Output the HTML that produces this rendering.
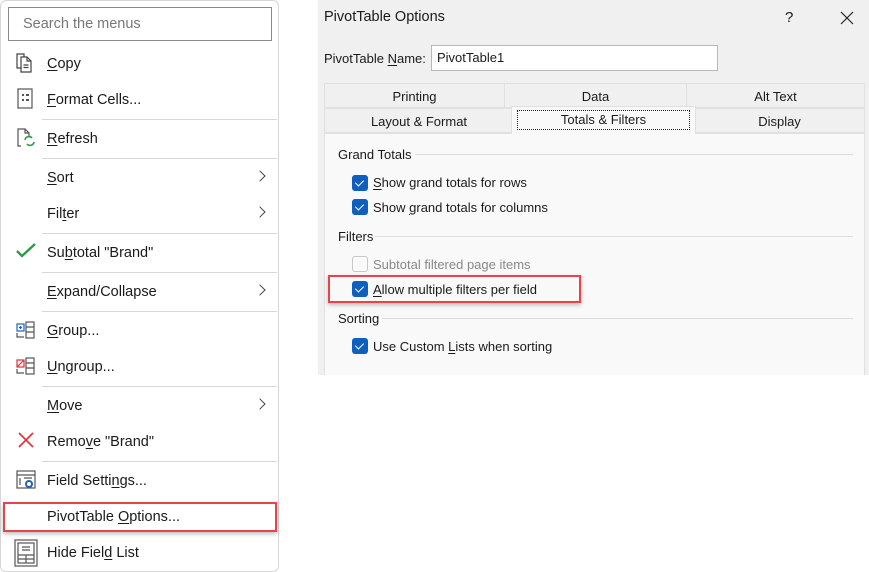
<!DOCTYPE html>
<html><head><meta charset="utf-8"><style>
*{margin:0;padding:0;box-sizing:border-box}
body{width:869px;height:572px;background:#fff;font-family:"Liberation Sans",sans-serif;position:relative;overflow:hidden;color:#1a1a1a}
.a{position:absolute}
.menu{left:0;top:0;width:279px;height:572px;border:1px solid #d6d6d6;border-radius:6px;background:#fff}
.search{left:8px;top:7px;width:264px;height:34px;border:1px solid #8a8a8a;color:#777;font-size:14.5px;padding:8px 14px}
.it{left:47px;font-size:14.5px;line-height:18px}
.sep{left:42px;width:235px;height:1px;background:#d8d8d8}
.chev{left:256px;width:8px;height:8px;border-right:1.5px solid #444;border-top:1.5px solid #444;transform:rotate(45deg)}
u{text-decoration:underline;text-underline-offset:2px}
.dlg{left:318px;top:0;width:551px;height:375px;background:#f0f0f0}
.tab{font-size:13px;text-align:center;height:25px;line-height:25px;border:1px solid #e0e0e0;background:#f0f0f0}
.panel{left:324px;top:133px;width:541px;height:242px;background:#f9f9f9;border:1px solid #e0e0e0;border-bottom:none}
.lbl{font-size:13px;left:338px}
.line{height:1px;background:#dcdcdc}
.cb{left:352px;width:16px;height:16px;border-radius:3px;background:#0f5fbf}
.cb::after{content:"";position:absolute;left:5px;top:3px;width:4px;height:7px;border-right:1.5px solid #fff;border-bottom:1.5px solid #fff;transform:rotate(45deg)}
.ct{left:373px;font-size:13px}
.red{border:2px solid #e8424a;box-shadow:0 2px 4px rgba(0,0,0,.25)}
</style></head><body>
<div class="a menu"></div>
<div class="a search">Search the menus</div>

<svg class="a" style="left:15px;top:52px" width="22" height="22" viewBox="0 0 22 22" fill="none" stroke="#444" stroke-width="1.2"><path d="M2 2h7v14H2z"/><path d="M6 5h6l4 4v11H6z" fill="#fff"/><path d="M12 5v4h4M8.5 13h5M8.5 15.5h5"/></svg>
<div class="a it" style="top:55px"><u>C</u>opy</div>
<svg class="a" style="left:17px;top:88px" width="18" height="22" viewBox="0 0 18 22" fill="none" stroke="#555" stroke-width="1.2"><rect x="1" y="1" width="14" height="19"/><path d="M5 7h2M5 12h2M9 7h3M9 12h3" stroke-width="2"/></svg>
<div class="a it" style="top:91px"><u>F</u>ormat Cells...</div>
<div class="a sep" style="top:119px"></div>
<svg class="a" style="left:16px;top:127px" width="22" height="22" viewBox="0 0 22 22" fill="none" stroke-width="1.2"><path d="M5 19H2V2h7l4 4v3" stroke="#555"/><path d="M9 2v4h4" stroke="#555"/><path d="M9 13a4 4 0 0 1 7-2M18 15a4 4 0 0 1-7 2" stroke="#2e9a48" stroke-width="1.6"/></svg>
<div class="a it" style="top:130px"><u>R</u>efresh</div>
<div class="a sep" style="top:158px"></div>
<div class="a it" style="top:169px"><u>S</u>ort</div><div class="a chev" style="top:172px"></div>
<div class="a it" style="top:205px">Fil<u>t</u>er</div><div class="a chev" style="top:208px"></div>
<div class="a sep" style="top:233px"></div>
<svg class="a" style="left:15px;top:242px" width="22" height="18" viewBox="0 0 22 18" fill="none" stroke="#2e9a48" stroke-width="2.4"><path d="M2 9l5 5L20 2"/></svg>
<div class="a it" style="top:244px">Su<u>b</u>total "Brand"</div>
<div class="a sep" style="top:272px"></div>
<div class="a it" style="top:283px"><u>E</u>xpand/Collapse</div><div class="a chev" style="top:286px"></div>
<div class="a sep" style="top:311px"></div>
<svg class="a" style="left:15px;top:320px" width="22" height="20" viewBox="0 0 22 20" fill="none" stroke="#555" stroke-width="1.2"><rect x="2" y="4" width="7" height="7" stroke="#1e63b8"/><path d="M5.5 6v3M4 7.5h3" stroke="#1e63b8"/><rect x="11" y="2" width="8" height="16"/><path d="M11 7h8M11 12h8M2 13v4h7"/></svg>
<div class="a it" style="top:322px"><u>G</u>roup...</div>
<svg class="a" style="left:15px;top:356px" width="22" height="20" viewBox="0 0 22 20" fill="none" stroke="#555" stroke-width="1.2"><rect x="2" y="4" width="7" height="7" stroke="#e0303a"/><path d="M2 11l7-7" stroke="#e0303a"/><rect x="11" y="2" width="8" height="16"/><path d="M11 7h8M11 12h8M2 13v4h7"/></svg>
<div class="a it" style="top:358px"><u>U</u>ngroup...</div>
<div class="a sep" style="top:386px"></div>
<div class="a it" style="top:397px"><u>M</u>ove</div><div class="a chev" style="top:400px"></div>
<svg class="a" style="left:17px;top:431px" width="18" height="18" viewBox="0 0 18 18" stroke="#e0303a" stroke-width="1.6"><path d="M2 2l14 14M16 2L2 16"/></svg>
<div class="a it" style="top:433px">Remo<u>v</u>e "Brand"</div>
<div class="a sep" style="top:461px"></div>
<svg class="a" style="left:15px;top:469px" width="22" height="22" viewBox="0 0 22 22" fill="none" stroke="#555" stroke-width="1.2"><rect x="2" y="2" width="18" height="17"/><path d="M2 6h18M5 9v7M9 9h8" /><circle cx="14" cy="15" r="3" stroke="#1e63b8" stroke-width="2"/></svg>
<div class="a it" style="top:472px">Field Setti<u>n</u>gs...</div>
<div class="a red" style="left:3px;top:502px;width:274px;height:30px"></div>
<div class="a it" style="top:508px">PivotTable <u>O</u>ptions...</div>
<svg class="a" style="left:14px;top:539px" width="24" height="28" viewBox="0 0 24 28" fill="none" stroke="#555" stroke-width="1.2"><rect x="1" y="1" width="22" height="26"/><rect x="4" y="4" width="16" height="20"/><path d="M8 8h8M8 11h8M4 16h16M4 20h16M12 16v8"/></svg>
<div class="a it" style="top:544px">Hide Fiel<u>d</u> List</div>

<div class="a dlg"></div>
<div class="a" style="left:324px;top:9px;font-size:14.5px">PivotTable Options</div>
<div class="a" style="left:785px;top:9px;font-size:15px">?</div>
<svg class="a" style="left:840px;top:11px" width="14" height="14" viewBox="0 0 14 14" stroke="#222" stroke-width="1.2"><path d="M1 1l12 12M13 1L1 13"/></svg>
<div class="a" style="left:324px;top:51px;font-size:13px">PivotTable <u>N</u>ame:</div>
<div class="a" style="left:431px;top:45px;width:287px;height:26px;background:#fff;border:1px solid #b8b8b8;font-size:13px;padding:4px 5px">PivotTable1</div>
<div class="a tab" style="left:324px;top:83px;width:181px">Printing</div>
<div class="a tab" style="left:504px;top:83px;width:183px">Data</div>
<div class="a tab" style="left:686px;top:83px;width:179px">Alt Text</div>
<div class="a tab" style="left:324px;top:108px;width:190px">Layout &amp; Format</div>
<div class="a tab" style="left:694px;top:108px;width:171px">Display</div>
<div class="a panel"></div>
<div class="a tab" style="left:511px;top:106px;width:185px;height:28px;background:#f9f9f9;border-bottom:none;line-height:26px"><span style="border:1px dotted #222;display:inline-block;width:173px;line-height:18px;margin-top:2px">Totals &amp; Filters</span></div>

<div class="a lbl" style="top:147px">Grand Totals</div><div class="a line" style="left:415px;top:154px;width:438px"></div>
<div class="a cb" style="top:175px"></div><div class="a ct" style="top:175px"><u>S</u>how grand totals for rows</div>
<div class="a cb" style="top:199px"></div><div class="a ct" style="top:200px">Show <u>g</u>rand totals for columns</div>
<div class="a lbl" style="top:229px">Filters</div><div class="a line" style="left:375px;top:236px;width:478px"></div>
<div class="a" style="left:352px;top:256px;width:16px;height:16px;border:1px solid #c8c8c8;border-radius:3px;background:#fafafa"></div><div class="a ct" style="top:257px;color:#888">Subtotal filtered page items</div>
<div class="a red" style="left:328px;top:275px;width:253px;height:28px"></div>
<div class="a cb" style="top:281px"></div><div class="a ct" style="top:282px"><u>A</u>llow multiple filters per field</div>
<div class="a lbl" style="top:311px">Sorting</div><div class="a line" style="left:382px;top:318px;width:471px"></div>
<div class="a cb" style="top:338px"></div><div class="a ct" style="top:339px">Use Custom <u>L</u>ists when sorting</div>
</body></html>
